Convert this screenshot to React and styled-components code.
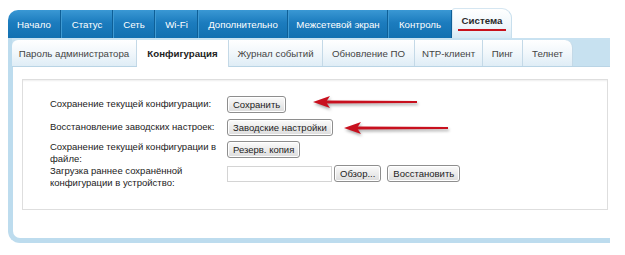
import React from 'react';
import styled, { createGlobalStyle } from 'styled-components';

const GlobalStyle = createGlobalStyle`
  html, body {
    margin: 0;
    background: #fff;
    font-family: "Liberation Sans", Arial, sans-serif;
  }
`;

const mainTabs = [
  { label: 'Начало', w: 53 },
  { label: 'Статус', w: 52 },
  { label: 'Сеть', w: 42 },
  { label: 'Wi-Fi', w: 43 },
  { label: 'Дополнительно', w: 90 },
  { label: 'Межсетевой экран', w: 100 },
  { label: 'Контроль', w: 64 },
  { label: 'Система', w: 60, active: true },
];

const subTabs = [
  { label: 'Пароль администратора', w: 125 },
  { label: 'Конфигурация', w: 92, active: true },
  { label: 'Журнал событий', w: 94 },
  { label: 'Обновление ПО', w: 92 },
  { label: 'NTP-клиент', w: 68 },
  { label: 'Пинг', w: 40 },
  { label: 'Телнет', w: 50, last: true },
];

const Page = styled.div`
  padding: 8px 0 0 8px;
`;

const Frame = styled.div`
  width: 602px;
`;

const MainNav = styled.div`
  display: flex;
  align-items: flex-end;
  height: 30px;
`;

const NavTab = styled.div`
  box-sizing: border-box;
  width: ${p => p.$w}px;
  height: ${p => (p.$active ? 30 : 28)}px;
  display: flex;
  align-items: center;
  justify-content: center;
  font-size: 9.7px;
  color: ${p => (p.$active ? '#2b2b2b' : '#fff')};
  font-weight: ${p => (p.$active ? 'bold' : 'normal')};
  background: ${p =>
    p.$active
      ? 'linear-gradient(#ffffff, #eef6fb 60%, #d6e9f4)'
      : 'linear-gradient(#3a98d4, #1c7cbe 45%, #1270b1)'};
  border-right: 1px solid ${p => (p.$active ? '#c8dfed' : '#0e5f97')};
  border-left: 1px solid ${p => (p.$active ? '#d8e9f3' : '#3f9ad3')};
  border-top: ${p => (p.$active ? '1px solid #d5e6f1' : 'none')};
  border-radius: ${p => (p.$active ? '3px 10px 0 0' : '0')};
  &:first-child {
    border-top-left-radius: 10px;
    border-left: none;
  }
`;

const Underlined = styled.span`
  position: relative;
  top: -1px;
  padding: 0 4px 3px;
  border-bottom: 2px solid #c8111b;
`;

const Body = styled.div`
  background: #fff;
  border-left: 5px solid #bddcee;
  border-bottom: 5px solid #bddcee;
  border-bottom-left-radius: 12px;
  padding-bottom: 28px;
`;

const SubNav = styled.div`
  display: flex;
  height: 26px;
  margin-left: -1px;
  border-top: 2px solid #c9e2f1;
  background: #c7e1f0;
  border-bottom: 1px solid #b9d4e5;
`;

const SubTab = styled.div`
  box-sizing: border-box;
  width: ${p => p.$w}px;
  height: ${p => (p.$active ? 27 : 26)}px;
  display: flex;
  align-items: center;
  justify-content: center;
  font-size: 9.7px;
  color: ${p => (p.$active ? '#222' : '#444')};
  font-weight: ${p => (p.$active ? 'bold' : 'normal')};
  background: ${p => (p.$active ? '#fff' : 'linear-gradient(#ffffff, #f1f7fb 50%, #dfedf6)')};
  border-right: 1px solid #c4d9e7;
  border-top-right-radius: ${p => (p.$last ? '8px' : '0')};
  &:first-child {
    border-top-left-radius: 6px;
  }
`;

const Panel = styled.div`
  position: relative;
  box-sizing: border-box;
  margin: 12px 2px 0 9px;
  height: 131px;
  border: 1px solid #dedede;
  box-shadow: inset 0 2px 2px -1px #eee;
  padding: 16px 0 0 27px;
  font-size: 9.5px;
  color: #222;
`;

const Row = styled.div`
  display: flex;
  align-items: flex-start;
  margin-top: ${p => p.$gap || 0}px;
`;

const Label = styled.div`
  width: 177px;
  flex-shrink: 0;
  line-height: 12px;
  padding-top: ${p => (p.$pad ?? 2)}px;
`;

const Controls = styled.div`
  display: flex;
  align-items: center;
`;

const Button = styled.button`
  height: 17px;
  padding: 0 5px;
  margin: 0;
  font-family: inherit;
  font-size: 9.5px;
  color: #222;
  background: linear-gradient(#fbfbfb, #ececec 50%, #dcdcdc);
  border: 1px solid #8e8e8e;
  border-radius: 3px;
  box-shadow: inset 0 0 0 1px #fff;
  margin-right: ${p => p.$mr || 0}px;
`;

const FileInput = styled.div`
  box-sizing: border-box;
  width: 105px;
  height: 16px;
  border: 1px solid #d4d4d4;
  background: #fff;
  margin-right: 2px;
`;

const ArrowBox = styled.svg`
  position: absolute;
  left: ${p => p.$x}px;
  top: ${p => p.$y}px;
  overflow: visible;
  filter: drop-shadow(1px 2px 1.5px rgba(0, 0, 0, 0.35));
`;

const Arrow = ({ x, y }) => (
  <ArrowBox $x={x} $y={y} width="106" height="14" viewBox="0 0 106 14">
    <path d="M12 5.6 L104 6 L104 8 L12 8.4 Z" fill="#c8101e" />
    <path d="M0 7 L17 1 L13 7 L17 13 Z" fill="#c8101e" />
  </ArrowBox>
);

export default function App() {
  return (
    <Page>
      <GlobalStyle />
      <Frame>
        <MainNav>
          {mainTabs.map(t => (
            <NavTab key={t.label} $w={t.w} $active={t.active}>
              {t.active ? <Underlined>{t.label}</Underlined> : t.label}
            </NavTab>
          ))}
        </MainNav>
        <Body>
          <SubNav>
            {subTabs.map(t => (
              <SubTab key={t.label} $w={t.w} $active={t.active} $last={t.last}>
                {t.label}
              </SubTab>
            ))}
          </SubNav>
          <Panel>
            <Row>
              <Label>Сохранение текущей конфигурации:</Label>
              <Button>Сохранить</Button>
            </Row>
            <Row $gap={6}>
              <Label>Восстановление заводских настроек:</Label>
              <Button>Заводские настройки</Button>
            </Row>
            <Row $gap={5}>
              <Label $pad={0}>Сохранение текущей конфигурации в файле:</Label>
              <Button>Резерв. копия</Button>
            </Row>
            <Row>
              <Label $pad={0}>Загрузка раннее сохранённой конфигурации в устройство:</Label>
              <Controls>
                <FileInput />
                <Button $mr={6}>Обзор...</Button>
                <Button>Восстановить</Button>
              </Controls>
            </Row>
            <Arrow x={290} y={15} />
            <Arrow x={321} y={41} />
          </Panel>
        </Body>
      </Frame>
    </Page>
  );
}
